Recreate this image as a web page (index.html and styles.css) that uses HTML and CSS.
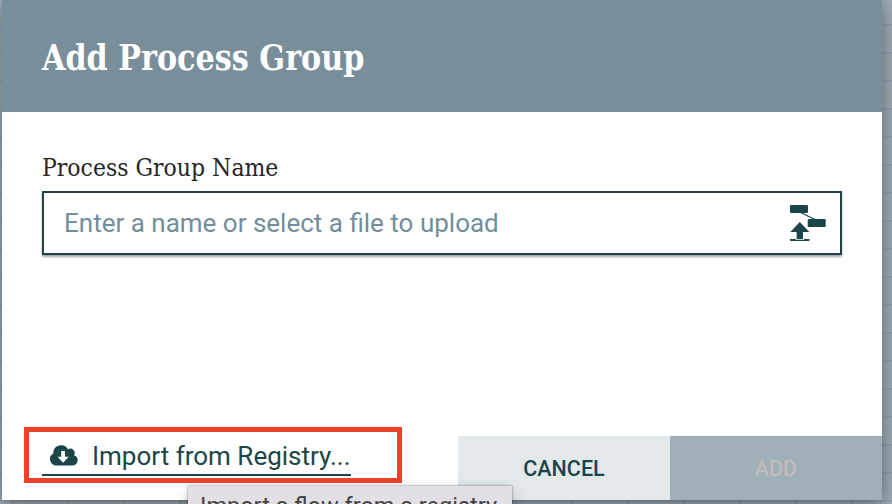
FILE: index.html
```
<!DOCTYPE html>
<html lang="en">
<head>
<meta charset="utf-8">
<title>Add Process Group</title>
<link rel="stylesheet" href="styles.css">
</head>
<body>
<main class="dialog">
  <header class="dialog-header"><h1 class="title">Add Process Group</h1></header>
  <section class="dialog-content">
    <label class="label" for="name">Process Group Name</label>
    <div class="field">
      <input id="name" class="name-input" type="text" placeholder="Enter a name or select a file to upload">
      <svg class="upload-icon" width="36" height="37" viewBox="0 0 36 37" fill="currentColor">
        <rect x="0" y="0" width="18" height="8" rx="1"/>
        <rect x="17.7" y="14" width="18" height="8" rx="1"/>
        <path d="M10.5 7.5L25 14.5" stroke="currentColor" stroke-width="1.2"/>
        <path d="M9.8 17L19.3 27H13V34.2H6.6V27H0.3Z"/>
        <path d="M0 34H5.8V35H13.8V34H19.5V35.2Q19.5 36 18.5 36H1Q0 36 0 35.2Z"/>
      </svg>
    </div>
  </section>
  <footer class="dialog-footer">
    <div class="highlight">
      <a class="import-link">
        <svg class="cloud-icon" width="28" height="21" viewBox="0 0 28 21">
          <path fill="currentColor" d="M6.5 20.5A6.4 6.4 0 0 1 3.2 8.6A8 8 0 0 1 18.2 4.4A4.2 4.2 0 0 1 24 10.2A5.3 5.3 0 0 1 22.8 20.5Z"/>
          <path fill="#fff" d="M11.2 6H15V11.8H18.7L13.1 17.8L7.5 11.8H11.2Z"/>
        </svg>
        <span class="import-text">Import from Registry...</span>
      </a>
    </div>
    <div class="buttons">
      <button class="button cancel">CANCEL</button>
      <button class="button add" disabled>ADD</button>
    </div>
  </footer>
</main>
<div class="tooltip">Import a flow from a registry</div>
</body>
</html>
```
FILE: styles.css
```
* { box-sizing: border-box; }
body {
  margin: 0;
  height: 504px;
  overflow: hidden;
  padding-left: 2px;
  font-family: Roboto, "Liberation Sans", sans-serif;
  background-color: #a0afb9;
  background-image:
    linear-gradient(rgba(70, 90, 105, .12) 2px, transparent 2px),
    linear-gradient(90deg, rgba(70, 90, 105, .12) 2px, transparent 2px);
  background-size: 28px 28px;
  background-position: 11px 24px;
}
.dialog {
  width: 880px;
  height: 500px;
  display: flex;
  flex-direction: column;
  background: #fff;
  box-shadow: 0 4px 20px rgba(0, 0, 0, .45);
}
.dialog-header {
  height: 112px;
  padding: 0 40px;
  display: flex;
  align-items: center;
  background: #788e9a;
}
.title {
  margin: 4px 0 0;
  font: bold 35px/48px "Roboto Slab", "DejaVu Serif", serif;
  color: #fff;
  white-space: nowrap;
  transform: scaleX(.864);
  transform-origin: left;
}
.dialog-content { padding: 40px 40px 0; flex: 1; }
.label {
  display: block;
  width: max-content;
  height: 39px;
  font: 24px/32px "Roboto Slab", "DejaVu Serif", serif;
  color: #262626;
  transform: scaleX(.917);
  transform-origin: left;
}
.field {
  height: 64px;
  padding: 0 14px 0 20px;
  display: flex;
  align-items: center;
  border: 2px solid #1c4549;
  box-shadow: 0 2px 2px rgba(0, 0, 0, .35);
}
.name-input {
  flex: 1;
  height: 60px;
  padding: 0;
  border: 0;
  outline: 0;
  background: none;
  font: 26px Roboto, sans-serif;
}
.name-input::placeholder { color: #728e9b; opacity: 1; }
.upload-icon { color: #1c4549; }
.dialog-footer {
  height: 73px;
  padding-left: 22px;
  display: flex;
  justify-content: space-between;
  align-items: flex-start;
}
.highlight {
  width: 378px;
  height: 56px;
  padding: 7px 13px;
  border: 5px solid #ee4129;
}
.import-link {
  width: 309px;
  height: 37px;
  padding-left: 8px;
  display: flex;
  align-items: center;
  gap: 14px;
  border-bottom: 2px solid #1c4549;
  color: #1c4549;
  font-size: 26px;
  line-height: 30px;
  white-space: nowrap;
}
.cloud-icon { margin-bottom: 2px; }
.import-text { margin-bottom: 2px; }
.buttons { display: flex; align-self: flex-end; }
.button {
  width: 212px;
  height: 64px;
  border: 0;
  padding: 1px 0 0;
  font: 500 21.5px Roboto, sans-serif;
}
.cancel { background: #e3e8eb; color: #1c4549; }
.add { background: #a1afb8; color: #bdbdbd; }
.tooltip {
  position: absolute;
  left: 188px;
  top: 486px;
  width: 324px;
  height: 40px;
  padding: 6px 12px;
  background: #e3e0e5;
  color: #444;
  font-size: 23.5px;
  line-height: 28px;
  white-space: nowrap;
  box-shadow: 0 0 2px rgba(0, 0, 0, .5), 0 4px 14px rgba(0, 0, 0, .2);
}
```
